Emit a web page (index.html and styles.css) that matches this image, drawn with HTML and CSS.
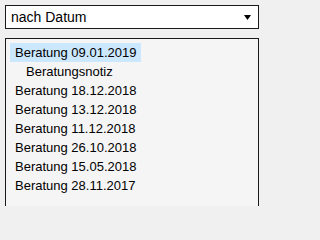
FILE: index.html
```html
<!DOCTYPE html>
<html lang="de">
<head>
<meta charset="utf-8">
<link rel="stylesheet" href="styles.css">
</head>
<body>
<div class="page">
  <div class="select">
    <span class="select-text">nach Datum</span>
    <svg class="arrow" width="7" height="5" viewBox="0 0 7 5"><polygon points="0,0 7,0 3.5,5" fill="#000"/></svg>
  </div>
  <div class="list">
    <div class="item selected">Beratung 09.01.2019</div>
    <div class="item sub">Beratungsnotiz</div>
    <div class="item">Beratung 18.12.2018</div>
    <div class="item">Beratung 13.12.2018</div>
    <div class="item">Beratung 11.12.2018</div>
    <div class="item">Beratung 26.10.2018</div>
    <div class="item">Beratung 15.05.2018</div>
    <div class="item">Beratung 28.11.2017</div>
  </div>
</div>
</body>
</html>
```
FILE: styles.css
```css
html, body {
  margin: 0;
  padding: 0;
  background: #f0f0f0;
  font-family: "Liberation Sans", Arial, sans-serif;
  color: #000;
}
.page {
  width: 262px;
  height: 206px;
  padding: 5px 3px 0 5px;
  display: flex;
  flex-direction: column;
  gap: 9px;
  box-sizing: border-box;
  overflow: hidden;
}
.select {
  height: 24px;
  box-sizing: border-box;
  border: 1px solid #1a1a1a;
  background: #fff;
  display: flex;
  align-items: center;
  justify-content: space-between;
  padding: 0 7px 0 5px;
  font-size: 14px;
}
.select-text {
  line-height: 22px;
}
.arrow {
  display: block;
  margin-top: 1px;
}
.list {
  flex: 1;
  border: 1px solid #1a1a1a;
  border-bottom: none;
  background: #f5f5f5;
  padding: 4px 4px 0 4px;
  font-size: 13px;
  display: flex;
  flex-direction: column;
  align-items: flex-start;
}
.item {
  line-height: 19px;
  padding: 0 5px;
  white-space: nowrap;
}
.item.selected {
  background: #cce8ff;
}
.item.sub {
  padding-left: 16px;
}
```
